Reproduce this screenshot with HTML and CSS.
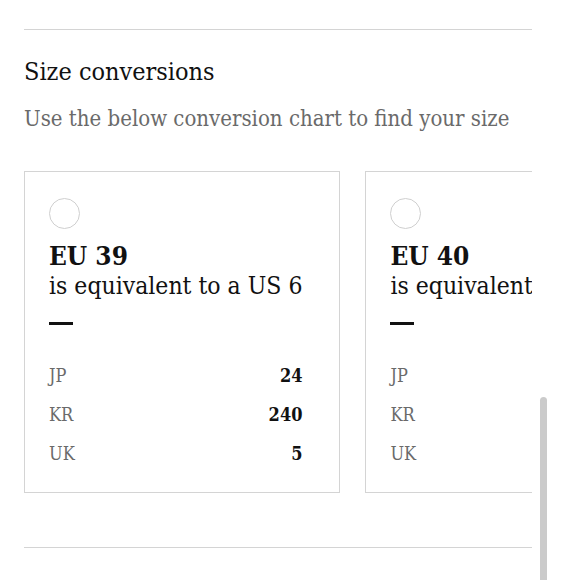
FILE: index.html
```html
<!DOCTYPE html>
<html lang="en">
<head>
<meta charset="utf-8">
<title>Size conversions</title>
<link rel="stylesheet" href="styles.css">
</head>
<body>
<main class="page">
  <hr class="rule rule-top">
  <h2 class="title">Size conversions</h2>
  <p class="subtitle">Use the below conversion chart to find your size</p>
  <div class="cards">
    <div class="card">
      <span class="radio"></span>
      <div class="eu">EU 39</div>
      <div class="equiv">is equivalent to a US 6</div>
      <div class="dash"></div>
      <div class="rows">
        <div class="row"><span class="label">JP</span><span class="value">24</span></div>
        <div class="row"><span class="label">KR</span><span class="value">240</span></div>
        <div class="row"><span class="label">UK</span><span class="value">5</span></div>
      </div>
    </div>
    <div class="card">
      <span class="radio"></span>
      <div class="eu">EU 40</div>
      <div class="equiv">is equivalent to a US 7</div>
      <div class="dash"></div>
      <div class="rows">
        <div class="row"><span class="label">JP</span><span class="value">25</span></div>
        <div class="row"><span class="label">KR</span><span class="value">250</span></div>
        <div class="row"><span class="label">UK</span><span class="value">6</span></div>
      </div>
    </div>
  </div>
  <hr class="rule rule-bottom">
</main>
<div class="scroll-thumb"></div>
</body>
</html>
```
FILE: styles.css
```css
html, body {
  margin: 0;
  padding: 0;
  background: #fff;
}
body {
  font-family: "DejaVu Serif Condensed", "DejaVu Serif", serif;
  font-stretch: condensed;
  color: #111;
  width: 580px;
  height: 580px;
  overflow: hidden;
  position: relative;
}
.page {
  width: 508px;
  padding: 29px 0 0 24px;
}
.rule {
  border: 0;
  border-top: 1px solid #d4d4d4;
  margin: 0;
}
.title {
  font-size: 25px;
  font-weight: normal;
  margin: 27px 0 0;
  line-height: 30px;
}
.subtitle {
  font-size: 22px;
  color: #6a6a6a;
  margin: 17px 0 0;
  line-height: 30px;
}
.cards {
  display: flex;
  gap: 25px;
  overflow: hidden;
  margin-top: 37px;
}
.card {
  flex: 0 0 316px;
  box-sizing: border-box;
  height: 322px;
  border: 1px solid #d4d4d4;
  padding: 26px 37px 0 24px;
}
.radio {
  display: block;
  width: 31px;
  height: 31px;
  box-sizing: border-box;
  border: 1px solid #cfcfcf;
  border-radius: 50%;
}
.eu {
  font-size: 26px;
  font-weight: bold;
  line-height: 30px;
  margin-top: 12px;
}
.equiv {
  font-size: 24.5px;
  line-height: 30px;
  white-space: nowrap;
}
.dash {
  width: 24px;
  height: 3px;
  background: #111;
  margin-top: 21px;
}
.rows {
  margin-top: 38px;
  display: flex;
  flex-direction: column;
  gap: 13px;
}
.row {
  display: flex;
  justify-content: space-between;
  align-items: baseline;
  line-height: 26px;
}
.label {
  font-size: 18px;
  color: #6a6a6a;
}
.value {
  font-size: 18px;
  font-weight: bold;
  color: #111;
}
.rule-bottom {
  margin-top: 54px;
}
.scroll-thumb {
  position: absolute;
  left: 540px;
  top: 397px;
  width: 7px;
  height: 190px;
  background: #cbcbcb;
  border-radius: 4px;
}
```
